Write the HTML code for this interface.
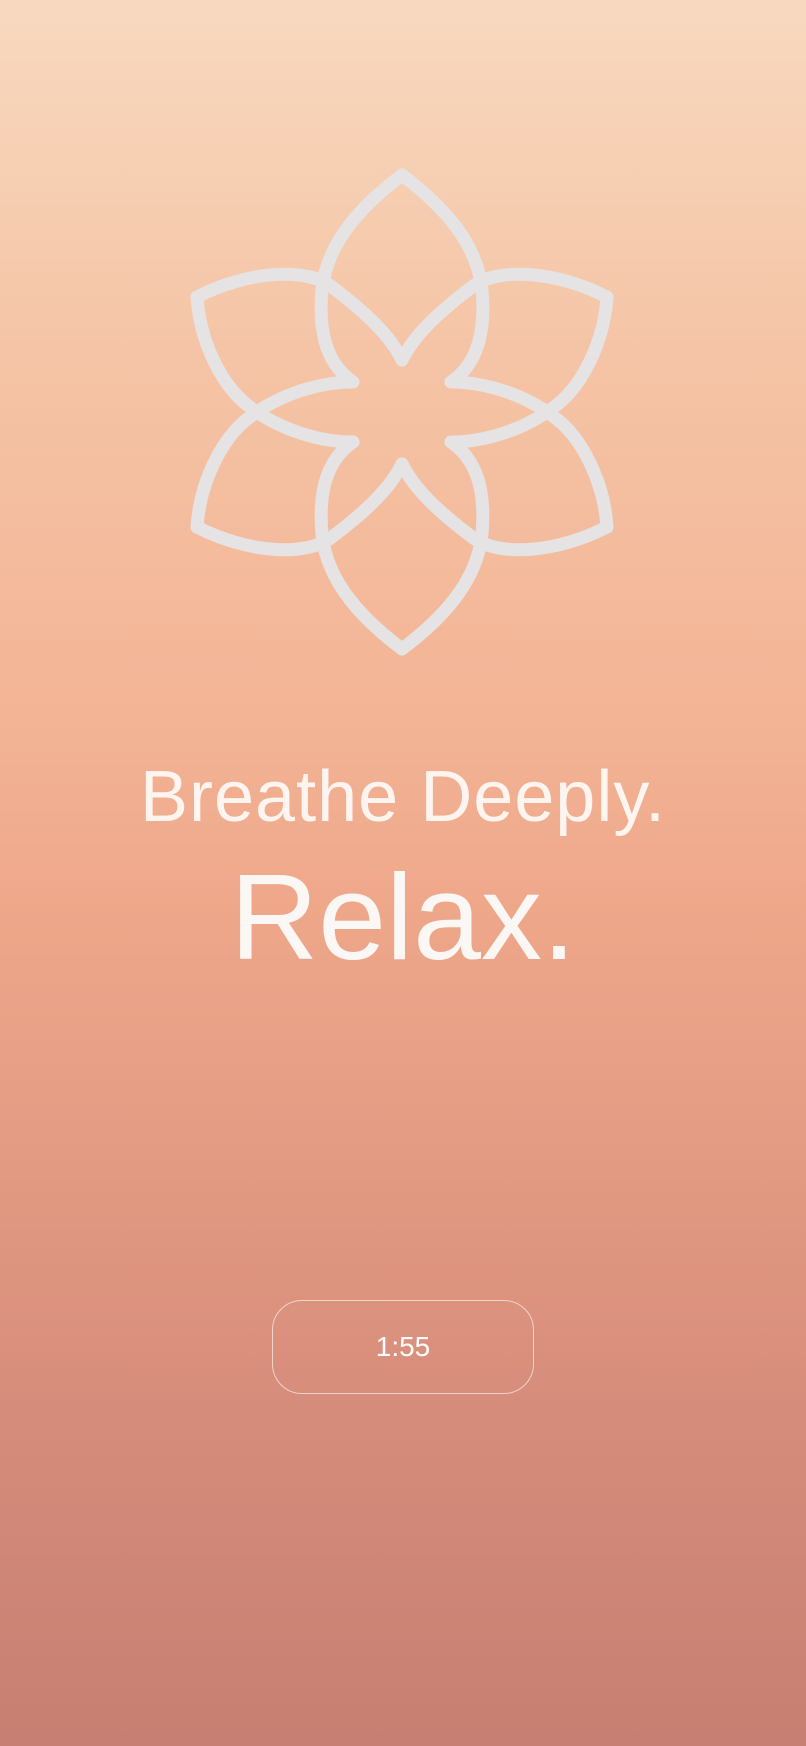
<!DOCTYPE html>
<html><head><meta charset="utf-8"><style>
html,body{margin:0;padding:0}
body{width:806px;height:1746px;overflow:hidden;position:relative;
background:linear-gradient(180deg,#f8d9bf 0%,#f5c4a6 20%,#f3b596 40%,#efa78a 52%,#e49c84 65%,#d78d7b 80%,#c67f72 100%);
font-family:"Liberation Sans",sans-serif;color:#fbf7f5}
svg{position:absolute;left:0;top:0}
.t1{position:absolute;left:0;width:806px;text-align:center;top:752px;font-size:72px;line-height:90px;letter-spacing:1px;color:rgba(255,250,248,.93)}
.t2{position:absolute;left:0;width:806px;text-align:center;top:847px;font-size:122px;line-height:140px;letter-spacing:0px}
.btn{position:absolute;left:272px;top:1300px;width:262px;height:94px;border:1.5px solid rgba(255,255,255,.6);border-radius:30px;box-sizing:border-box;text-align:center;line-height:92px;font-size:28px;color:#fff}
</style></head><body>
<svg width="806" height="1746" viewBox="0 0 806 1746">
<defs>
<g id="q" fill="none" stroke="#e5e3e3" stroke-width="13" stroke-linejoin="round" stroke-linecap="round">
<path d="M402,175 C365,203 327,240 322,290 C318,335 328,365 353,382"/>
<path d="M197,297 C245,272 305,266 332,287 C365,312 390,335 402,360"/>
<path d="M197,297 C200,342 222,387 250,407 C280,430 320,442 353,442"/>
</g>
</defs>
<use href="#q"/>
<use href="#q" transform="matrix(1,0,0,-1,0,824)"/>
<use href="#q" transform="matrix(-1,0,0,1,804,0)"/>
<use href="#q" transform="matrix(-1,0,0,-1,804,824)"/>
</svg>
<div class="t1">Breathe Deeply.</div>
<div class="t2">Relax.</div>
<div class="btn">1:55</div>
</body></html>
